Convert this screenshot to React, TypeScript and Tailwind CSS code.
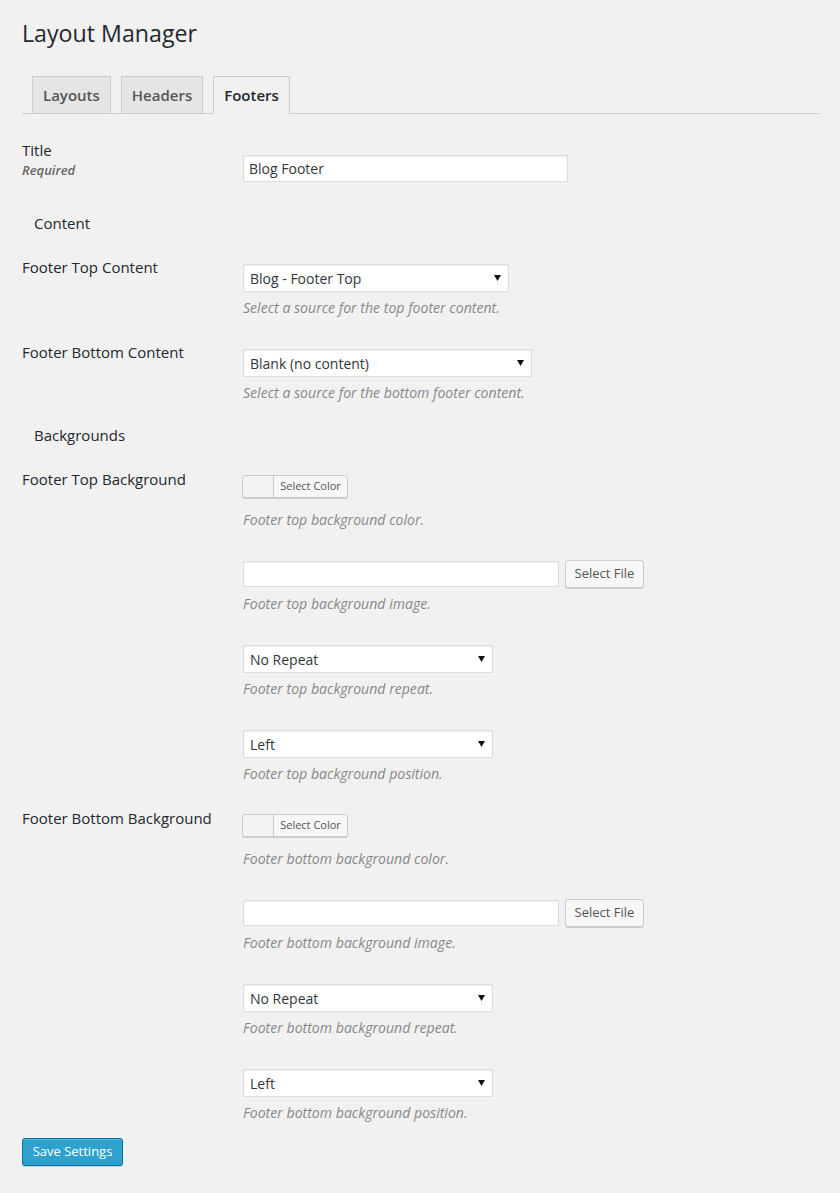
import React from "react";

const font = { fontFamily: '"Open Sans", "Noto Sans", sans-serif' };

function Arrow() {
  return (
    <svg width="7" height="6" viewBox="0 0 7 6" className="absolute right-[7px] top-1/2 -translate-y-1/2">
      <polygon points="0,0 7,0 3.5,6" fill="#111" />
    </svg>
  );
}

function Select({ value, w }: { value: string; w: string }) {
  return (
    <div
      className={`relative h-[28px] ${w} bg-white border border-[#ddd] shadow-[inset_0_1px_2px_rgba(0,0,0,0.07)] flex items-center pl-[6px] text-[14px] text-[#32373c]`}
    >
      <span>{value}</span>
      <Arrow />
    </div>
  );
}

function Desc({ children }: { children: React.ReactNode }) {
  return <p className="mt-[6px] text-[14.1px] leading-[20px] italic text-[#888]">{children}</p>;
}

function ColorButton() {
  return (
    <div className="-ml-px mb-[6px] flex h-[23px] w-[106px] rounded-[3px] border border-[#ccc] bg-[#f3f3f3] shadow-[0_1px_0_#ccc] overflow-hidden">
      <div className="w-[30px]" />
      <div className="flex-1 border-l border-[#ccc] bg-[#f7f7f7] flex items-center justify-center text-[11px] text-[#555]">
        Select Color
      </div>
    </div>
  );
}

function FileField() {
  return (
    <div className="flex items-center h-[28px]">
      <div className="h-[26px] w-[316px] bg-white border border-[#ddd] shadow-[inset_0_1px_2px_rgba(0,0,0,0.07)]" />
      <div className="ml-[6px] h-[28px] w-[79px] rounded-[3px] border border-[#ccc] bg-[#f7f7f7] shadow-[0_1px_0_#ccc] flex items-center justify-center text-[13px] text-[#555]">
        Select File
      </div>
    </div>
  );
}

function BackgroundGroup({ which }: { which: string }) {
  return (
    <div className="flex flex-col items-start">
      <ColorButton />
      <Desc>Footer {which} background color.</Desc>
      <div className="mt-[30px]">
        <FileField />
        <Desc>Footer {which} background image.</Desc>
      </div>
      <div className="mt-[31px]">
        <Select value="No Repeat" w="w-[250px]" />
        <Desc>Footer {which} background repeat.</Desc>
      </div>
      <div className="mt-[31px]">
        <Select value="Left" w="w-[250px]" />
        <Desc>Footer {which} background position.</Desc>
      </div>
    </div>
  );
}

function Label({ children }: { children: React.ReactNode }) {
  return <div className="w-[221px] shrink-0 text-[15px] leading-[20px] text-[#23282d]">{children}</div>;
}

function SectionHead({ children, mt }: { children: React.ReactNode; mt: string }) {
  return <div className={`${mt} pl-[12px] text-[15px] leading-[20px] text-[#23282d]`}>{children}</div>;
}

export default function App() {
  const tabs = [
    { name: "Layouts", active: false },
    { name: "Headers", active: false },
    { name: "Footers", active: true },
  ];
  return (
    <div
      style={font}
      className="min-h-[1193px] w-[840px] bg-[#f1f1f1] bg-[radial-gradient(#eaeaea_0.6px,transparent_0.7px)] bg-[size:8px_8px] pl-[22px] pr-[21px] text-[#444]"
    >
      <h1 className="pt-[19px] text-[23.2px] leading-[29px] font-normal text-[#23282d]">Layout Manager</h1>

      <div className="mt-[28px] flex items-end border-b border-[#ccc] h-[38px]">
        {tabs.map((t) => (
          <div
            key={t.name}
            className={`-mb-px ml-[10px] h-[38px] px-[10px] border flex items-center text-[15px] font-semibold ${
              t.active
                ? "bg-[#f1f1f1] border-[#ccc] border-b-[#f1f1f1] text-[#23282d]"
                : "bg-[#e5e5e5] border-[#ccc] text-[#555]"
            }`}
          >
            {t.name}
          </div>
        ))}
      </div>

      {/* Title */}
      <div className="mt-[26px] flex items-start">
        <Label>
          <div>Title</div>
          <div className="text-[13px] font-semibold italic text-[#666]">Required</div>
        </Label>
        <div className="pt-[15px]">
          <div className="h-[27px] w-[325px] bg-white border border-[#ddd] shadow-[inset_0_1px_2px_rgba(0,0,0,0.07)] flex items-center pl-[5px] text-[14px] text-[#32373c]">
            Blog Footer
          </div>
        </div>
      </div>

      <SectionHead mt="mt-[31px]">Content</SectionHead>

      <div className="mt-[24px] flex items-start">
        <Label>Footer Top Content</Label>
        <div className="pt-[7px]">
          <Select value="Blog - Footer Top" w="w-[266px]" />
          <Desc>Select a source for the top footer content.</Desc>
        </div>
      </div>

      <div className="mt-[24px] flex items-start">
        <Label>Footer Bottom Content</Label>
        <div className="pt-[7px]">
          <Select value="Blank (no content)" w="w-[289px]" />
          <Desc>Select a source for the bottom footer content.</Desc>
        </div>
      </div>

      <SectionHead mt="mt-[22px]">Backgrounds</SectionHead>

      <div className="mt-[24px] flex items-start">
        <Label>Footer Top Background</Label>
        <div className="pt-[6px]">
          <BackgroundGroup which="top" />
        </div>
      </div>

      <div className="mt-[24px] flex items-start">
        <Label>Footer Bottom Background</Label>
        <div className="pt-[6px]">
          <BackgroundGroup which="bottom" />
        </div>
      </div>

      <div className="mt-[15px]">
        <button className="h-[28px] w-[101px] rounded-[3px] border border-[#0074a2] bg-[#2ea2cc] text-[13px] text-white shadow-[inset_0_1px_0_rgba(120,200,230,0.5),0_1px_0_rgba(0,0,0,0.15)]">
          Save Settings
        </button>
      </div>
    </div>
  );
}
